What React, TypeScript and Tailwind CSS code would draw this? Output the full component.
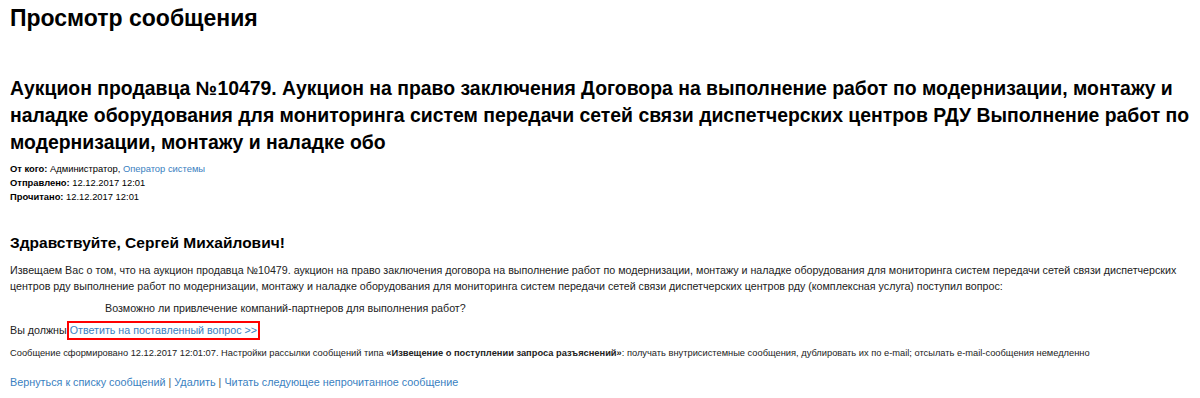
import React from "react";

const link = "text-[#3a7fc1] hover:underline";

const App = () => {
  return (
    <div
      className="w-[1200px] h-[398px] bg-white text-black px-[10px] overflow-hidden"
      style={{ fontFamily: '"Liberation Sans", Arial, sans-serif' }}
    >
      <h1 className="text-[23px] font-bold leading-[28px] pt-[4px]">Просмотр сообщения</h1>

      <h2 className="text-[19.4px] font-bold leading-[27px] mt-[43px]">
        Аукцион продавца №10479. Аукцион на право заключения Договора на выполнение работ по модернизации, монтажу и
        наладке оборудования для мониторинга систем передачи сетей связи диспетчерских центров РДУ Выполнение работ по
        модернизации, монтажу и наладке обо
      </h2>

      <div className="text-[9.4px] leading-[14px] mt-[6px]">
        <div>
          <b>От кого:</b> Администратор, <a className={link}>Оператор системы</a>
        </div>
        <div>
          <b>Отправлено:</b> 12.12.2017 12:01
        </div>
        <div>
          <b>Прочитано:</b> 12.12.2017 12:01
        </div>
      </div>

      <h3 className="text-[15.5px] font-bold leading-[20px] mt-[29px]">Здравствуйте, Сергей Михайлович!</h3>

      <p className="text-[10.7px] leading-[16px] mt-[9px] text-[#222]">
        Извещаем Вас о том, что на аукцион продавца №10479. аукцион на право заключения договора на выполнение работ по
        модернизации, монтажу и наладке оборудования для мониторинга систем передачи сетей связи диспетчерских центров рду
        выполнение работ по модернизации, монтажу и наладке оборудования для мониторинга систем передачи сетей связи
        диспетчерских центров рду (комплексная услуга) поступил вопрос:
      </p>

      <p className="text-[10.7px] leading-[16px] mt-[6px] pl-[95px] text-[#222]">
        Возможно ли привлечение компаний-партнеров для выполнения работ?
      </p>

      <div className="text-[10.7px] leading-[15px] mt-[5px] flex items-center text-[#222]">
        <span>Вы должны</span>
        <a className={`${link} border-2 border-[#ff0000] px-[1px]`}>Ответить на поставленный вопрос &gt;&gt;</a>
      </div>

      <p className="text-[9.3px] leading-[14px] mt-[6px] text-[#222]">
        Сообщение сформировано 12.12.2017 12:01:07. Настройки рассылки сообщений типа{" "}
        <b>«Извещение о поступлении запроса разъяснений»</b>: получать внутрисистемные сообщения, дублировать их по e-mail;
        отсылать e-mail-сообщения немедленно
      </p>

      <div className="text-[10.8px] leading-[16px] mt-[14px]">
        <a className={link}>Вернуться к списку сообщений</a>
        <span className="text-[#6b5a3a]"> | </span>
        <a className={link}>Удалить</a>
        <span className="text-[#6b5a3a]"> | </span>
        <a className={link}>Читать следующее непрочитанное сообщение</a>
      </div>
    </div>
  );
};

export default App;
